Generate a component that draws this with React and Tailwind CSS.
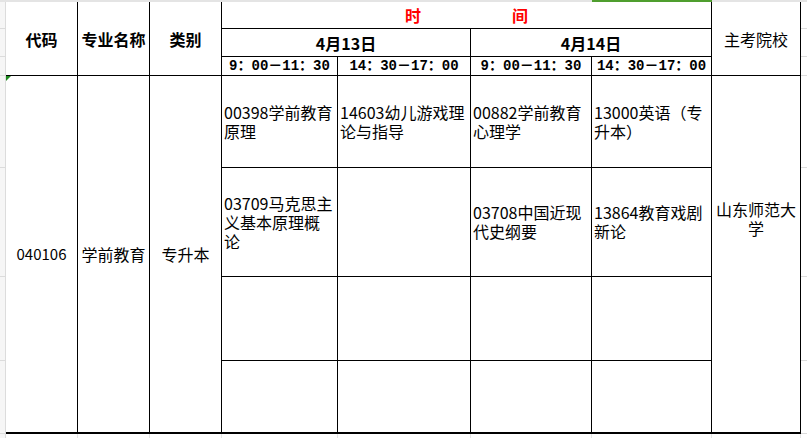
export default function App() {
  const dataLine = "whitespace-nowrap";
  const g = "border-b border-[#dcdcdc]";
  return (
    <div className="w-[807px] h-[438px] overflow-hidden bg-white text-black font-['Noto_Sans_CJK_SC','Noto_Sans',sans-serif]">
      <div className="flex h-[2px] bg-[#e4e4e4]">
        <div className="w-[592px]" />
        <div className="w-[120px] bg-[#4f9e2e]" />
      </div>
      <div className="grid grid-cols-[6px_72px_72px_72px_116px_133px_121px_120px_89px_7px] grid-rows-[27px_28px_19px_92px_109px_84px_73px]">
        {/* left gutter */}
        <div className={`col-start-1 row-start-1 border-r border-[#dcdcdc] ${g} bg-[#f6f6f6]`} />
        <div className={`col-start-1 row-start-2 border-r border-[#dcdcdc] ${g} bg-[#f6f6f6]`} />
        <div className={`col-start-1 row-start-3 border-r border-[#dcdcdc] ${g} bg-[#f6f6f6]`} />
        <div className={`col-start-1 row-start-4 border-r border-[#dcdcdc] ${g} bg-[#f6f6f6]`} />
        <div className={`col-start-1 row-start-5 border-r border-[#dcdcdc] ${g} bg-[#f6f6f6]`} />
        <div className={`col-start-1 row-start-6 border-r border-[#dcdcdc] ${g} bg-[#f6f6f6]`} />
        <div className={`col-start-1 row-start-7 border-r border-[#dcdcdc] ${g} bg-[#f6f6f6]`} />
        {/* right gutter */}
        <div className={`col-start-10 row-start-1 border-r border-[#dcdcdc] ${g}`} />
        <div className={`col-start-10 row-start-2 border-r border-[#dcdcdc] ${g}`} />
        <div className={`col-start-10 row-start-3 border-r border-[#dcdcdc] ${g}`} />
        <div className={`col-start-10 row-start-4 border-r border-[#dcdcdc] ${g}`} />
        <div className={`col-start-10 row-start-5 border-r border-[#dcdcdc] ${g}`} />
        <div className={`col-start-10 row-start-6 border-r border-[#dcdcdc] ${g}`} />
        <div className={`col-start-10 row-start-7 border-r border-[#dcdcdc] ${g}`} />

        {/* header */}
        <div className="col-start-2 row-start-1 row-span-3 border-r border-b border-black flex items-center justify-center text-[16px] font-bold">代码</div>
        <div className="col-start-3 row-start-1 row-span-3 border-r border-b border-black flex items-center justify-center text-[16px] font-bold">专业名称</div>
        <div className="col-start-4 row-start-1 row-span-3 border-r border-b border-black flex items-center justify-center text-[16px] font-bold">类别</div>
        <div className="col-start-5 col-span-4 row-start-1 border-r border-b border-black flex items-center justify-center gap-[91px] text-[16px] font-bold text-[#ff0000]">
          <span>时</span>
          <span>间</span>
        </div>
        <div className="col-start-9 row-start-1 row-span-3 border-r border-b border-black flex items-center justify-center text-[16px]">主考院校</div>
        <div className="col-start-5 col-span-2 row-start-2 border-r border-b border-black flex items-center justify-center text-[16px] font-bold">4月13日</div>
        <div className="col-start-7 col-span-2 row-start-2 border-r border-b border-black flex items-center justify-center text-[16px] font-bold">4月14日</div>
        <div className="col-start-5 row-start-3 border-r border-b border-black flex items-center justify-center text-[14px] font-bold leading-none font-['Liberation_Mono','Noto_Sans_CJK_SC',monospace]">9：00－11：30</div>
        <div className="col-start-6 row-start-3 border-r border-b border-black flex items-center justify-center text-[14px] font-bold leading-none font-['Liberation_Mono','Noto_Sans_CJK_SC',monospace]">14：30－17：00</div>
        <div className="col-start-7 row-start-3 border-r border-b border-black flex items-center justify-center text-[14px] font-bold leading-none font-['Liberation_Mono','Noto_Sans_CJK_SC',monospace]">9：00－11：30</div>
        <div className="col-start-8 row-start-3 border-r border-b border-black flex items-center justify-center text-[14px] font-bold leading-none font-['Liberation_Mono','Noto_Sans_CJK_SC',monospace]">14：30－17：00</div>

        {/* merged body columns */}
        <div className="relative col-start-2 row-start-4 row-span-4 border-r border-b-2 border-black flex items-center justify-center text-[15px]">
          <div className="absolute left-0 top-0 w-0 h-0 border-t-[5px] border-t-[#1f8a1f] border-r-[5px] border-r-transparent" />
          040106
        </div>
        <div className="col-start-3 row-start-4 row-span-4 border-r border-b-2 border-black flex items-center justify-center text-[16px]">学前教育</div>
        <div className="col-start-4 row-start-4 row-span-4 border-r border-b-2 border-black flex items-center justify-center text-[16px]">专升本</div>

        {/* row 4 */}
        <div className="col-start-5 row-start-4 border-r border-b border-black flex items-center pl-[2px] text-[16px] leading-[19px]">
          <div className={dataLine}>00398学前教育<br />原理</div>
        </div>
        <div className="col-start-6 row-start-4 border-r border-b border-black flex items-center pl-[2px] text-[16px] leading-[19px]">
          <div className={dataLine}>14603幼儿游戏理<br />论与指导</div>
        </div>
        <div className="col-start-7 row-start-4 border-r border-b border-black flex items-center pl-[2px] text-[16px] leading-[19px]">
          <div className={dataLine}>00882学前教育<br />心理学</div>
        </div>
        <div className="col-start-8 row-start-4 border-r border-b border-black flex items-center pl-[2px] text-[16px] leading-[19px]">
          <div className={dataLine}>13000英语（专<br />升本）</div>
        </div>

        {/* row 5 */}
        <div className="col-start-5 row-start-5 border-r border-b border-black flex items-center pl-[2px] text-[16px] leading-[19px]">
          <div className={dataLine}>03709马克思主<br />义基本原理概<br />论</div>
        </div>
        <div className="col-start-6 row-start-5 border-r border-b border-black" />
        <div className="col-start-7 row-start-5 border-r border-b border-black flex items-center pl-[2px] text-[16px] leading-[19px]">
          <div className={dataLine}>03708中国近现<br />代史纲要</div>
        </div>
        <div className="col-start-8 row-start-5 border-r border-b border-black flex items-center pl-[2px] text-[16px] leading-[19px]">
          <div className={dataLine}>13864教育戏剧<br />新论</div>
        </div>

        {/* row 6 */}
        <div className="col-start-5 row-start-6 border-r border-b border-black" />
        <div className="col-start-6 row-start-6 border-r border-b border-black" />
        <div className="col-start-7 row-start-6 border-r border-b border-black" />
        <div className="col-start-8 row-start-6 border-r border-b border-black" />

        {/* row 7 */}
        <div className="col-start-5 row-start-7 border-r border-b-2 border-black" />
        <div className="col-start-6 row-start-7 border-r border-b-2 border-black" />
        <div className="col-start-7 row-start-7 border-r border-b-2 border-black" />
        <div className="col-start-8 row-start-7 border-r border-b-2 border-black" />

        {/* school */}
        <div className="col-start-9 row-start-4 row-span-3 border-r border-black flex items-center justify-center text-center text-[16px] leading-[19px]">
          <div>山东师范大<br />学</div>
        </div>
        <div className="col-start-9 row-start-7 border-r border-b-2 border-black" />
      </div>
      <div className="grid grid-cols-[6px_72px_72px_72px_116px_133px_121px_120px_89px_7px] h-[4px]">
        <div className="border-r border-[#dcdcdc] bg-[#f6f6f6]" />
        <div className="border-r border-[#e4e4e4]" />
        <div className="border-r border-[#e4e4e4]" />
        <div className="border-r border-[#e4e4e4]" />
        <div className="border-r border-[#e4e4e4]" />
        <div className="border-r border-[#e4e4e4]" />
        <div className="border-r border-[#e4e4e4]" />
        <div className="border-r border-[#e4e4e4]" />
        <div className="border-r border-[#e4e4e4]" />
        <div className="border-r border-[#dcdcdc]" />
      </div>
    </div>
  );
}
